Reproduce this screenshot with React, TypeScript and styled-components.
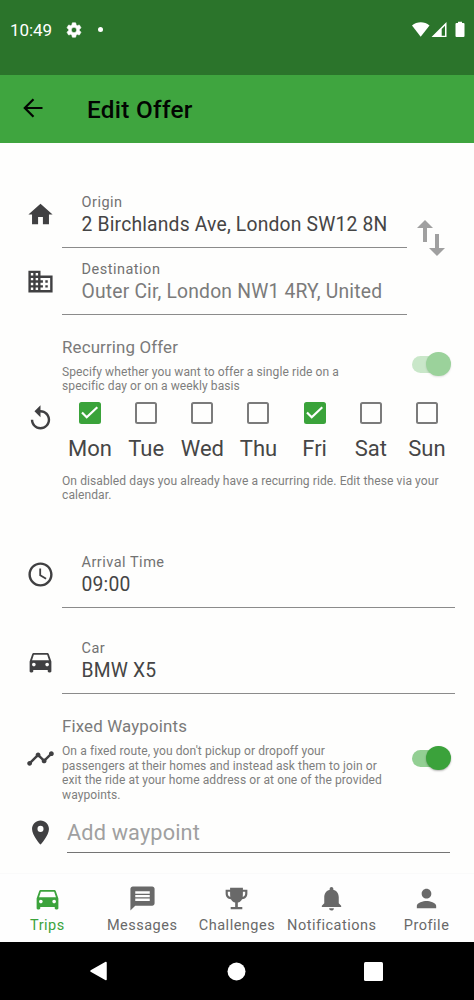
import React from "react";
import styled, { createGlobalStyle } from "styled-components";
import {
  MdHome, MdDomain, MdReplay, MdSchedule, MdDirectionsCar, MdTimeline, MdPlace,
  MdMessage, MdNotifications, MdPerson, MdSettings, MdSwapVert,
} from "react-icons/md";

const Global = createGlobalStyle`
  *, *::before, *::after { box-sizing: border-box; }
  body { margin: 0; background: #fefefd; font-family: Roboto, sans-serif; }
`;

const Screen = styled.div`
  width: 474px;
  height: 1000px;
  display: flex;
  flex-direction: column;
  overflow: hidden;
  background: #fefefd;
`;
const StatusBar = styled.header`
  height: 75px;
  flex: none;
  padding: 15px 9px 0 10px;
  display: flex;
  align-items: flex-start;
  background: #2b742b;
  color: #fff;
`;
const Clock = styled.span`
  width: 55px;
  font-size: 17px;
  line-height: 31px;
  letter-spacing: -0.05px;
`;
const Gear = styled(MdSettings)`
  display: block;
  width: 18px;
  height: 18px;
  margin-top: 5.5px;
  path:last-child {
    stroke: currentColor;
    stroke-width: 0.8px;
  }
`;
const Dot = styled.i`
  width: 5px;
  height: 5px;
  margin: 12px auto 0 15px;
  border-radius: 50%;
  background: #fff;
`;
const Indicators = styled.svg`
  display: block;
  flex: none;
  margin-top: 6px;
`;
const AppBar = styled.div`
  height: 67.5px;
  flex: none;
  display: flex;
  align-items: center;
  padding: 0 0 0 23px;
  background: #3fa53f;
  color: #020502;
  svg { margin-top: -2px; }
`;
const Title = styled.h1`
  margin: 2px 0 0 44px;
  font-size: 24.3px;
  font-weight: 500;
  line-height: 30px;
  letter-spacing: 0.3px;
`;
const Form = styled.main`
  flex: 1;
  min-height: 0;
  padding-top: 38.5px;
`;
const IconCell = styled.div<{ $top?: number }>`
  width: 62px;
  flex: none;
  padding: ${(p) => p.$top ?? 0}px 0 0 26px;
  color: #404042;
  svg { display: block; }
`;
const Row = styled.div<{ $h: number; $gap?: number }>`
  display: flex;
  height: ${(p) => p.$h}px;
  margin-top: ${(p) => p.$gap ?? 0}px;
`;
const Places = styled.div`
  display: flex;
`;
const PlaceList = styled.div`
  width: 406.5px;
`;
const Swap = styled.button`
  border: 0;
  padding: 0;
  margin: 33px 0 0 0;
  height: 48px;
  background: none;
  color: #a0a0a0;
  svg { display: block; }
`;
const Field = styled.label<{ $right?: number }>`
  flex: 1;
  min-width: 0;
  display: flex;
  flex-direction: column;
  margin-right: ${(p) => p.$right ?? 0}px;
  padding: 12px 0 0 19.5px;
  border-bottom: 1.2px solid #8b8b8b;
  white-space: nowrap;
`;
const Label = styled.span`
  font-size: 14.5px;
  line-height: 20px;
  letter-spacing: 0.5px;
  color: #727272;
`;
const Value = styled.span<{ $muted?: boolean }>`
  font-size: 19.3px;
  line-height: 24px;
  letter-spacing: 0.19px;
  color: ${(p) => (p.$muted ? "#7b7b7b" : "#454545")};
`;
const Section = styled.section<{ $h: number; $gap: number }>`
  display: flex;
  height: ${(p) => p.$h}px;
  margin-top: ${(p) => p.$gap}px;
`;
const SectionBody = styled.div`
  flex: 1;
`;
const Head = styled.div`
  display: flex;
  justify-content: space-between;
  padding-right: 23.5px;
`;
const Heading = styled.h2`
  margin: 0;
  font-size: 16.9px;
  font-weight: 400;
  line-height: 22px;
  letter-spacing: 0.14px;
  color: #7a7a7a;
`;
const Note = styled.p<{ $top: number }>`
  margin: ${(p) => p.$top}px 0 0;
  font-size: 12.07px;
  line-height: 14.5px;
  letter-spacing: 0.075px;
  color: #7e7e7e;
  white-space: pre;
`;
const Toggle = styled.span<{ $top: number; $faded?: boolean }>`
  display: flex;
  justify-content: flex-end;
  align-items: center;
  width: 38.5px;
  height: 17px;
  margin-top: ${(p) => p.$top}px;
  border-radius: 9px;
  background: linear-gradient(${(p) => (p.$faded ? "#c9e7c9, #c9e7c9" : "#93cf93, #93cf93")}) left / 30px 100% no-repeat;
`;
const Thumb = styled.i<{ $faded?: boolean }>`
  width: 24.5px;
  height: 24.5px;
  flex: none;
  border-radius: 50%;
  background: ${(p) => (p.$faded ? "#9bd29b" : "#3ba23b")};
  box-shadow: 0 1px 2px rgba(0, 0, 0, ${(p) => (p.$faded ? 0.12 : 0.3)});
`;
const Days = styled.div`
  display: grid;
  grid-template-columns: repeat(7, 56.15px);
  margin-top: 8px;
`;
const Day = styled.div`
  display: flex;
  flex-direction: column;
  align-items: center;
  font-size: 22px;
  line-height: 26px;
  color: #464646;
`;
const Box = styled.span<{ $on: boolean }>`
  width: 22px;
  height: 22px;
  margin-bottom: 12px;
  border: 2.2px solid ${(p) => (p.$on ? "#3aa33a" : "#7b7b7b")};
  border-radius: 2.5px;
  background: ${(p) => (p.$on ? "#3aa33a" : "transparent")};
  svg { display: block; }
`;
const Waypoint = styled.div`
  width: 383px;
  margin-left: 5px;
  padding-top: 5px;
  border-bottom: 1.4px solid #747474;
  font-size: 21.7px;
  line-height: 30px;
  letter-spacing: 0.16px;
  color: #a0a0a0;
`;
const Tabs = styled.nav`
  flex: none;
  height: 69.5px;
  display: grid;
  grid-template-columns: repeat(5, 94.8px);
  border-top: 1px solid #fafafa;
  background: #fefefe;
`;
const Tab = styled.a<{ $active?: boolean }>`
  display: flex;
  flex-direction: column;
  align-items: center;
  padding-top: 10.5px;
  font-size: 14.5px;
  line-height: 20px;
  letter-spacing: 0.5px;
  white-space: nowrap;
  color: ${(p) => (p.$active ? "#3ca33c" : "#696969")};
  svg { display: block; margin-bottom: 3px; }
`;
const SystemNav = styled.footer`
  flex: none;
  height: 58px;
  display: flex;
  justify-content: center;
  align-items: center;
  gap: 118px;
  padding-right: 1.5px;
  background: #000;
  svg { display: block; }
`;

const BackArrow = () => (
  <svg width="20" height="20" viewBox="0 0 20 20" fill="none" stroke="currentColor" strokeWidth="2.2">
    <path d="M19.5 10H2M10.5 1.3L1.8 10l8.7 8.7" />
  </svg>
);
const Trophy = () => (
  <svg width="29" height="29" viewBox="0 0 24 24" fill="currentColor">
    <path d="M6.7 3h10.6v1.7H21v3.1c0 2.7-1.7 4.5-4.4 4.8-.8 1.5-2 2.5-3.5 2.8V19h3.7v1.9H7.2V19h3.7v-3.6c-1.5-.3-2.7-1.3-3.5-2.8C4.7 12.3 3 10.5 3 7.8V4.7h3.7V3zm0 3.500H4.800v1.300c0 1.400.8 2.400 2.100 2.800-.2-.9-.2-2.600-.2-4.100zm10.600 0c0 1.500 0 3.200-.2 4.100 1.300-.4 2.100-1.400 2.100-2.800V6.500h-1.900z" />
  </svg>
);

const days: [string, boolean][] = [
  ["Mon", true], ["Tue", false], ["Wed", false], ["Thu", false],
  ["Fri", true], ["Sat", false], ["Sun", false],
];

export default function App() {
  return (
    <>
      <Global />
      <Screen>
        <StatusBar>
          <Clock>10:49</Clock>
          <Gear />
          <Dot />
          <Indicators width="54" height="17" viewBox="0 0 54 17" fill="#fff">
            <path d="M1 4.500C6 .1 13.500 .1 18.500 4.500L9.700 15.800z" />
            <path fillRule="evenodd" d="M20.500 16L35.500 1v15zM30.700 8v6.700h3.300V4.800z" />
            <path d="M47 .7h4v1.400h1.500a1 1 0 0 1 1 1V15a1 1 0 0 1-1 1h-7a1 1 0 0 1-1-1V3.100a1 1 0 0 1 1-1H47z" />
          </Indicators>
        </StatusBar>
        <AppBar>
          <BackArrow />
          <Title>Edit Offer</Title>
        </AppBar>
        <Form>
          <Places>
            <PlaceList>
              <Row $h={67}>
                <IconCell $top={19}><MdHome size={29} /></IconCell>
                <Field>
                  <Label>Origin</Label>
                  <Value>2 Birchlands Ave, London SW12 8N</Value>
                </Field>
              </Row>
              <Row $h={67}>
                <IconCell $top={19}><MdDomain size={29} /></IconCell>
                <Field>
                  <Label>Destination</Label>
                  <Value $muted>Outer Cir, London NW1 4RY, United</Value>
                </Field>
              </Row>
            </PlaceList>
            <Swap aria-label="Swap"><MdSwapVert size={48} /></Swap>
          </Places>
          <Section $h={190} $gap={21}>
            <IconCell $top={67.5}><MdReplay size={29} /></IconCell>
            <SectionBody>
              <Head>
                <div>
                  <Heading>Recurring Offer</Heading>
                  <Note $top={6.8}>{"Specify whether you want to offer a single ride on a\nspecific day or on a weekly basis"}</Note>
                </div>
                <Toggle $top={19.5} $faded><Thumb $faded /></Toggle>
              </Head>
              <Days>
                {days.map(([name, on]) => (
                  <Day key={name}>
                    <Box $on={on}>
                      {on && (
                        <svg width="17.6" height="17.6" viewBox="0 0 17.6 17.6" fill="none" stroke="#fff" strokeWidth="2.2">
                          <path d="M1 8.6l4.7 4.7L16.300 3.200" />
                        </svg>
                      )}
                    </Box>
                    {name}
                  </Day>
                ))}
              </Days>
              <Note $top={12}>{"On disabled days you already have a recurring ride. Edit these via your\ncalendar."}</Note>
            </SectionBody>
          </Section>
          <Row $h={67} $gap={15}>
            <IconCell $top={19}><MdSchedule size={29} /></IconCell>
            <Field $right={19.5}>
              <Label>Arrival Time</Label>
              <Value>09:00</Value>
            </Field>
          </Row>
          <Row $h={67} $gap={19}>
            <IconCell $top={19.5}><MdDirectionsCar size={29} /></IconCell>
            <Field $right={19.5}>
              <Label>Car</Label>
              <Value>BMW X5</Value>
            </Field>
          </Row>
          <Section $h={97.5} $gap={21}>
            <IconCell $top={28.5}><MdTimeline size={29} /></IconCell>
            <SectionBody>
              <Head>
                <div>
                  <Heading>Fixed Waypoints</Heading>
                  <Note $top={7}>{"On a fixed route, you don't pickup or dropoff your\npassengers at their homes and instead ask them to join or\nexit the ride at your home address or at one of the provided\nwaypoints."}</Note>
                </div>
                <Toggle $top={34.5}><Thumb /></Toggle>
              </Head>
            </SectionBody>
          </Section>
          <Row $h={40}>
            <IconCell $top={5}><MdPlace size={29} /></IconCell>
            <Waypoint>Add waypoint</Waypoint>
          </Row>
        </Form>
        <Tabs>
          <Tab $active><MdDirectionsCar size={29} />Trips</Tab>
          <Tab><MdMessage size={29} />Messages</Tab>
          <Tab><Trophy />Challenges</Tab>
          <Tab><MdNotifications size={29} />Notifications</Tab>
          <Tab><MdPerson size={29} />Profile</Tab>
        </Tabs>
        <SystemNav>
          <svg width="20" height="20" viewBox="0 0 20 20"><path d="M2 10L17 1.500v17z" fill="#fff" stroke="#fff" strokeWidth="1.5" strokeLinejoin="round" /></svg>
          <svg width="19" height="19" viewBox="0 0 19 19"><circle cx="9.5" cy="9.5" r="9" fill="#fff" /></svg>
          <svg width="19" height="19" viewBox="0 0 19 19"><rect width="19" height="19" rx="1.5" fill="#fff" /></svg>
        </SystemNav>
      </Screen>
    </>
  );
}
